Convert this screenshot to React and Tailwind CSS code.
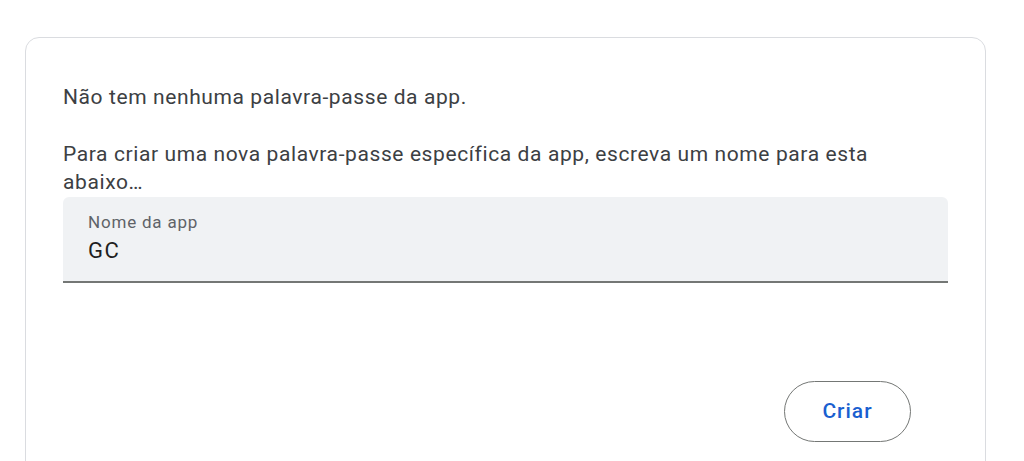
export default function App() {
  return (
    <div className="w-[1024px] h-[461px] overflow-hidden bg-white" style={{ fontFamily: 'Roboto, "Liberation Sans", sans-serif' }}>
      <div className="ml-[25px] mt-[37px] w-[961px] h-[500px] border border-[#dadce0] rounded-[14px] pt-[45px] px-[37px]">
        <p className="text-[21px] leading-[28px] tracking-[0.6px] text-[#3c4043]">Não tem nenhuma palavra-passe da app.</p>
        <p className="mt-[29px] text-[21px] leading-[28px] tracking-[0.6px] text-[#3c4043]">
          Para criar uma nova palavra-passe específica da app, escreva um nome para esta abaixo…
        </p>
        <div className="mt-[1px] h-[86px] bg-[#f0f2f4] rounded-t-[6px] border-b-2 border-[#747775] px-[25px] pt-[15px]">
          <div className="text-[17px] leading-[20px] tracking-[0.8px] text-[#5f6368]">Nome da app</div>
          <div className="mt-[5px] text-[22px] leading-[28px] tracking-[1.5px] text-[#1f1f1f]">GC</div>
        </div>
        <div className="flex justify-end mt-[98px] pr-[37px]">
          <button className="w-[127px] h-[61px] rounded-full border border-[#747775] text-[21px] tracking-[1px] font-medium text-[#1a5fd0]">
            Criar
          </button>
        </div>
      </div>
    </div>
  );
}
